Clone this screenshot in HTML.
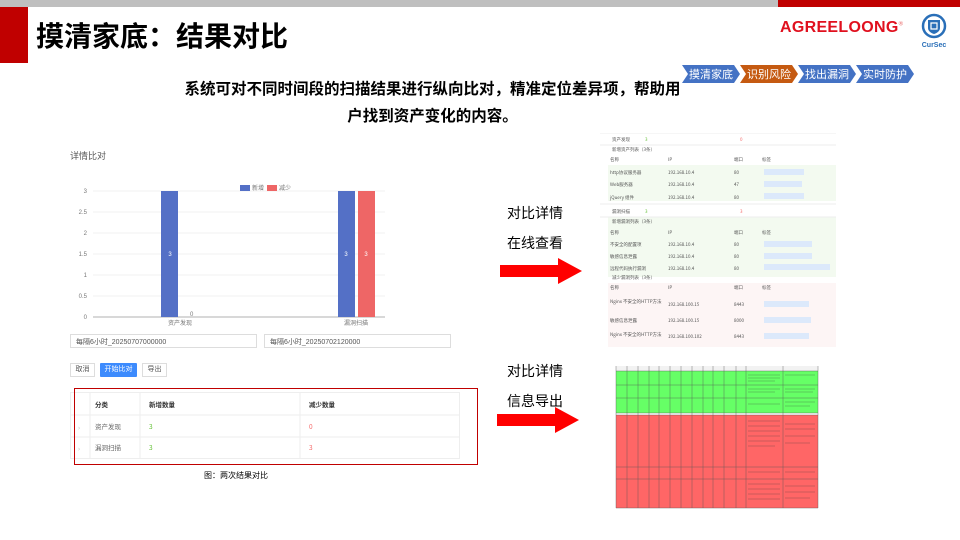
<!DOCTYPE html>
<html><head><meta charset="utf-8"><style>
*{margin:0;padding:0;box-sizing:border-box}
body{width:960px;height:540px;position:relative;overflow:hidden;background:#fff;font-family:"Liberation Sans","Noto Sans CJK SC",sans-serif}
.a{position:absolute}
.t{font-size:8px;color:#555;white-space:nowrap}
</style></head><body>
<div class="a" style="left:0;top:0;width:778px;height:7px;background:#bfbfbf"></div>
<div class="a" style="left:778px;top:0;width:182px;height:7px;background:#c00000"></div>
<div class="a" style="left:0;top:7px;width:28px;height:56px;background:#c00000"></div>
<div class="a" style="left:36px;top:15px;font-size:28px;font-weight:bold;color:#000">摸清家底：结果对比</div>
<div class="a" style="left:780px;top:19px;font-size:16px;font-weight:bold;color:#e0101e;letter-spacing:0.3px">AGREELOONG<sup style="font-size:6px;color:#e88">®</sup></div>
<svg class="a" style="left:916px;top:12px" width="36" height="38" viewBox="0 0 36 38">
<circle cx="18" cy="14" r="11" fill="none" stroke="#2a6fb8" stroke-width="2.5"/>
<path d="M12 8h12v8c0 3-3 5-6 6c-3-1-6-3-6-6z" fill="#2a6fb8"/>
<path d="M15 11h6v6h-6z" fill="none" stroke="#fff" stroke-width="1.2"/>
<text x="18" y="35" font-size="7" font-weight="bold" fill="#2a6fb8" text-anchor="middle" font-family="Liberation Sans">CurSec</text>
</svg>
<svg class="a" style="left:680px;top:64px" width="240" height="20">
<polygon points="2,1 54,1 60,10 54,19 2,19 8,10" fill="#4472c4"/>
<polygon points="60,1 112,1 118,10 112,19 60,19 66,10" fill="#c55a11"/>
<polygon points="118,1 170,1 176,10 170,19 118,19 124,10" fill="#4472c4"/>
<polygon points="176,1 228,1 234,10 228,19 176,19 182,10" fill="#4472c4"/>
<g font-size="11" fill="#fff" font-family="Noto Sans CJK SC" text-anchor="middle"><text x="31" y="14">摸清家底</text><text x="89" y="14">识别风险</text><text x="147" y="14">找出漏洞</text><text x="205" y="14">实时防护</text></g>
</svg>
<div class="a" style="left:160px;top:76px;width:545px;text-align:center;font-size:15.5px;font-weight:bold;line-height:27px;color:#000">系统可对不同时间段的扫描结果进行纵向比对，精准定位差异项，帮助用<br>户找到资产变化的内容。</div>

<!-- left screenshot -->
<div class="a t" style="left:70px;top:149px;font-size:9px">详情比对</div>
<svg class="a" style="left:60px;top:180px" width="400" height="150" font-family="Liberation Sans" font-size="6" fill="#777">
<g stroke="#eee" stroke-width="0.7"><line x1="33" y1="11" x2="325" y2="11"/><line x1="33" y1="32" x2="325" y2="32"/><line x1="33" y1="53" x2="325" y2="53"/><line x1="33" y1="74" x2="325" y2="74"/><line x1="33" y1="95" x2="325" y2="95"/><line x1="33" y1="116" x2="325" y2="116"/></g>
<line x1="33" y1="137" x2="325" y2="137" stroke="#999" stroke-width="0.7"/>
<text x="27" y="13" text-anchor="end">3</text><text x="27" y="34" text-anchor="end">2.5</text><text x="27" y="55" text-anchor="end">2</text><text x="27" y="76" text-anchor="end">1.5</text><text x="27" y="97" text-anchor="end">1</text><text x="27" y="118" text-anchor="end">0.5</text><text x="27" y="139" text-anchor="end">0</text>
<rect x="101" y="11" width="17" height="126" fill="#5470c6"/>
<rect x="278" y="11" width="17" height="126" fill="#5470c6"/>
<rect x="298" y="11" width="17" height="126" fill="#ee6666"/>
<text x="110" y="76" fill="#fff" text-anchor="middle">3</text><text x="286" y="76" fill="#fff" text-anchor="middle">3</text><text x="306" y="76" fill="#fff" text-anchor="middle">3</text>
<text x="130" y="136">0</text>
<text x="120" y="145" text-anchor="middle">资产发现</text><text x="296" y="145" text-anchor="middle">漏洞扫描</text>
<rect x="180" y="5" width="10" height="6" fill="#5470c6"/><text x="192" y="10">新增</text>
<rect x="207" y="5" width="10" height="6" fill="#ee6666"/><text x="219" y="10">减少</text>
</svg>
<div class="a t" style="left:70px;top:334px;width:187px;height:14px;border:1px solid #ddd;padding:2px 5px;font-size:7px">每隔6小时_20250707000000</div>
<div class="a t" style="left:264px;top:334px;width:187px;height:14px;border:1px solid #ddd;padding:2px 5px;font-size:7px">每隔6小时_20250702120000</div>
<div class="a t" style="left:70px;top:363px;width:25px;height:14px;border:1px solid #ddd;font-size:7px;text-align:center;line-height:12px">取消</div>
<div class="a t" style="left:100px;top:363px;width:37px;height:14px;background:#3d8bfd;color:#fff;font-size:7px;text-align:center;line-height:14px;border-radius:1px">开始比对</div>
<div class="a t" style="left:142px;top:363px;width:25px;height:14px;border:1px solid #ddd;font-size:7px;text-align:center;line-height:12px">导出</div>
<svg class="a" style="left:70px;top:392px" width="395" height="70" font-family="Noto Sans CJK SC" font-size="6.5">
<rect x="0.5" y="0.5" width="389" height="66" fill="none" stroke="#eee"/>
<g stroke="#eee"><line x1="0" y1="23" x2="390" y2="23"/><line x1="0" y1="45" x2="390" y2="45"/><line x1="20" y1="0" x2="20" y2="67"/><line x1="70" y1="0" x2="70" y2="67"/><line x1="230" y1="0" x2="230" y2="67"/></g>
<g fill="#333" font-weight="bold"><text x="25" y="15">分类</text><text x="79" y="15">新增数量</text><text x="239" y="15">减少数量</text></g>
<g fill="#666"><text x="25" y="37">资产发现</text><text x="25" y="58">漏洞扫描</text><text x="8" y="38" fill="#bbb">›</text><text x="8" y="59" fill="#bbb">›</text></g>
<text x="79" y="37" fill="#67c23a">3</text><text x="79" y="58" fill="#67c23a">3</text><text x="239" y="37" fill="#f56c6c">0</text><text x="239" y="58" fill="#f56c6c">3</text>
</svg>
<div class="a" style="left:74px;top:388px;width:404px;height:77px;border:1.3px solid #c00000"></div>
<div class="a" style="left:204px;top:470px;font-size:8px;color:#000">图：两次结果对比</div>

<!-- middle -->
<div class="a" style="left:507px;top:203px;font-size:14px;color:#000">对比详情</div>
<div class="a" style="left:507px;top:233px;font-size:14px;color:#000">在线查看</div>
<svg class="a" style="left:500px;top:258px" width="84" height="26"><polygon points="0,7 58,7 58,0 82,13 58,26 58,19 0,19" fill="#ff0000"/></svg>
<div class="a" style="left:507px;top:361px;font-size:14px;color:#000">对比详情</div>
<div class="a" style="left:507px;top:391px;font-size:14px;color:#000">信息导出</div>
<svg class="a" style="left:497px;top:407px" width="84" height="26"><polygon points="0,7 58,7 58,0 82,13 58,26 58,19 0,19" fill="#ff0000"/></svg>

<!-- right screenshot -->
<svg class="a" style="left:600px;top:133px" width="236" height="214" font-family="Noto Sans CJK SC" font-size="4.5" fill="#555">
<rect width="236" height="214" fill="#fff"/>
<line x1="0" y1="12" x2="236" y2="12" stroke="#eee"/><line x1="0" y1="0" x2="236" y2="0" stroke="#eee"/>
<text x="12" y="8">资产发现</text><text x="45" y="8" fill="#67c23a">3</text><text x="140" y="8" fill="#f56c6c">0</text>
<text x="12" y="18">新增资产列表（3条）</text>
<text x="10" y="28">名称</text><text x="68" y="28">IP</text><text x="134" y="28">端口</text><text x="162" y="28">标签</text>
<rect x="8" y="32" width="228" height="36" fill="#f3faf0"/>
<rect x="8" y="84" width="228" height="60" fill="#f3faf0"/>
<rect x="8" y="150" width="228" height="64" fill="#fdf5f5"/>
<g fill="#dce9fb"><rect x="164" y="36" width="40" height="6"/><rect x="164" y="48" width="38" height="6"/><rect x="164" y="60" width="40" height="6"/><rect x="164" y="108" width="48" height="6"/><rect x="164" y="120" width="48" height="6"/><rect x="164" y="131" width="66" height="6"/><rect x="164" y="168" width="45" height="6"/><rect x="164" y="184" width="47" height="6"/><rect x="164" y="200" width="45" height="6"/></g>
<text x="10" y="41">http协议服务器</text><text x="68" y="41">192.168.10.4</text><text x="134" y="41">80</text>
<text x="10" y="53">Web服务器</text><text x="68" y="53">192.168.10.4</text><text x="134" y="53">47</text>
<text x="10" y="66">jQuery 组件</text><text x="68" y="66">192.168.10.4</text><text x="134" y="66">80</text>
<line x1="0" y1="71" x2="236" y2="71" stroke="#eee"/><line x1="0" y1="84" x2="236" y2="84" stroke="#eee"/>
<text x="12" y="80">漏洞扫描</text><text x="45" y="80" fill="#67c23a">3</text><text x="140" y="80" fill="#f56c6c">3</text>
<text x="12" y="90">新增漏洞列表（3条）</text>
<text x="10" y="101">名称</text><text x="68" y="101">IP</text><text x="134" y="101">端口</text><text x="162" y="101">标签</text>
<text x="10" y="113">不安全的配置项</text><text x="68" y="113">192.168.10.4</text><text x="134" y="113">80</text>
<text x="10" y="125">敏感信息泄露</text><text x="68" y="125">192.168.10.4</text><text x="134" y="125">80</text>
<text x="10" y="137">远程代码执行漏洞</text><text x="68" y="137">192.168.10.4</text><text x="134" y="137">80</text>
<text x="12" y="146">减少漏洞列表（3条）</text>
<text x="10" y="156">名称</text><text x="68" y="156">IP</text><text x="134" y="156">端口</text><text x="162" y="156">标签</text>
<text x="10" y="170">Nginx 不安全的HTTP方法</text><text x="68" y="173">192.168.100.15</text><text x="134" y="173">8443</text>
<text x="10" y="189">敏感信息泄露</text><text x="68" y="189">192.168.100.15</text><text x="134" y="189">8000</text>
<text x="10" y="203">Nginx 不安全的HTTP方法</text><text x="68" y="205">192.168.100.102</text><text x="134" y="205">8443</text>
</svg>

<!-- excel -->
<svg class="a" style="left:615px;top:366px" width="204" height="144">
<rect width="204" height="144" fill="#fff"/>
<rect x="1" y="0" width="202" height="5" fill="#f2f2f2"/>
<rect x="1" y="5" width="202" height="42" fill="#66ff66"/>
<rect x="1" y="49" width="202" height="93" fill="#ff6666"/>
<g stroke="#555" stroke-width="0.4">
<line x1="1" y1="0" x2="1" y2="142"/><line x1="12" y1="0" x2="12" y2="142"/><line x1="23" y1="0" x2="23" y2="142"/><line x1="34" y1="0" x2="34" y2="142"/><line x1="44" y1="0" x2="44" y2="142"/><line x1="55" y1="0" x2="55" y2="142"/><line x1="66" y1="0" x2="66" y2="142"/><line x1="77" y1="0" x2="77" y2="142"/><line x1="88" y1="0" x2="88" y2="142"/><line x1="98" y1="0" x2="98" y2="142"/><line x1="109" y1="0" x2="109" y2="142"/><line x1="121" y1="0" x2="121" y2="142"/><line x1="131" y1="0" x2="131" y2="142"/><line x1="168" y1="0" x2="168" y2="142"/><line x1="203" y1="0" x2="203" y2="142"/>
<line x1="1" y1="5" x2="203" y2="5"/><line x1="1" y1="19" x2="203" y2="19"/><line x1="1" y1="32" x2="203" y2="32"/><line x1="1" y1="47" x2="203" y2="47"/><line x1="1" y1="49" x2="203" y2="49"/><line x1="1" y1="101" x2="203" y2="101"/><line x1="1" y1="113" x2="203" y2="113"/><line x1="1" y1="142" x2="203" y2="142"/>
</g>
<g stroke="#333" stroke-width="0.6" opacity="0.5">
<line x1="133" y1="9" x2="165" y2="9"/><line x1="133" y1="12" x2="165" y2="12"/><line x1="133" y1="15" x2="160" y2="15"/><line x1="170" y1="9" x2="200" y2="9"/>
<line x1="133" y1="23" x2="165" y2="23"/><line x1="133" y1="26" x2="160" y2="26"/><line x1="170" y1="23" x2="200" y2="23"/><line x1="170" y1="26" x2="198" y2="26"/>
<line x1="133" y1="38" x2="165" y2="38"/><line x1="170" y1="36" x2="200" y2="36"/><line x1="170" y1="40" x2="195" y2="40"/>
<line x1="133" y1="55" x2="165" y2="55"/><line x1="133" y1="60" x2="165" y2="60"/><line x1="133" y1="65" x2="165" y2="65"/><line x1="133" y1="70" x2="165" y2="70"/><line x1="133" y1="75" x2="165" y2="75"/><line x1="133" y1="80" x2="160" y2="80"/><line x1="170" y1="58" x2="200" y2="58"/><line x1="170" y1="63" x2="200" y2="63"/><line x1="170" y1="70" x2="200" y2="70"/><line x1="170" y1="77" x2="195" y2="77"/>
<line x1="133" y1="106" x2="165" y2="106"/><line x1="170" y1="106" x2="200" y2="106"/>
<line x1="133" y1="118" x2="165" y2="118"/><line x1="133" y1="123" x2="165" y2="123"/><line x1="133" y1="128" x2="165" y2="128"/><line x1="133" y1="133" x2="165" y2="133"/><line x1="170" y1="120" x2="200" y2="120"/><line x1="170" y1="126" x2="200" y2="126"/><line x1="170" y1="132" x2="195" y2="132"/>
</g>
</svg>
</body></html>
